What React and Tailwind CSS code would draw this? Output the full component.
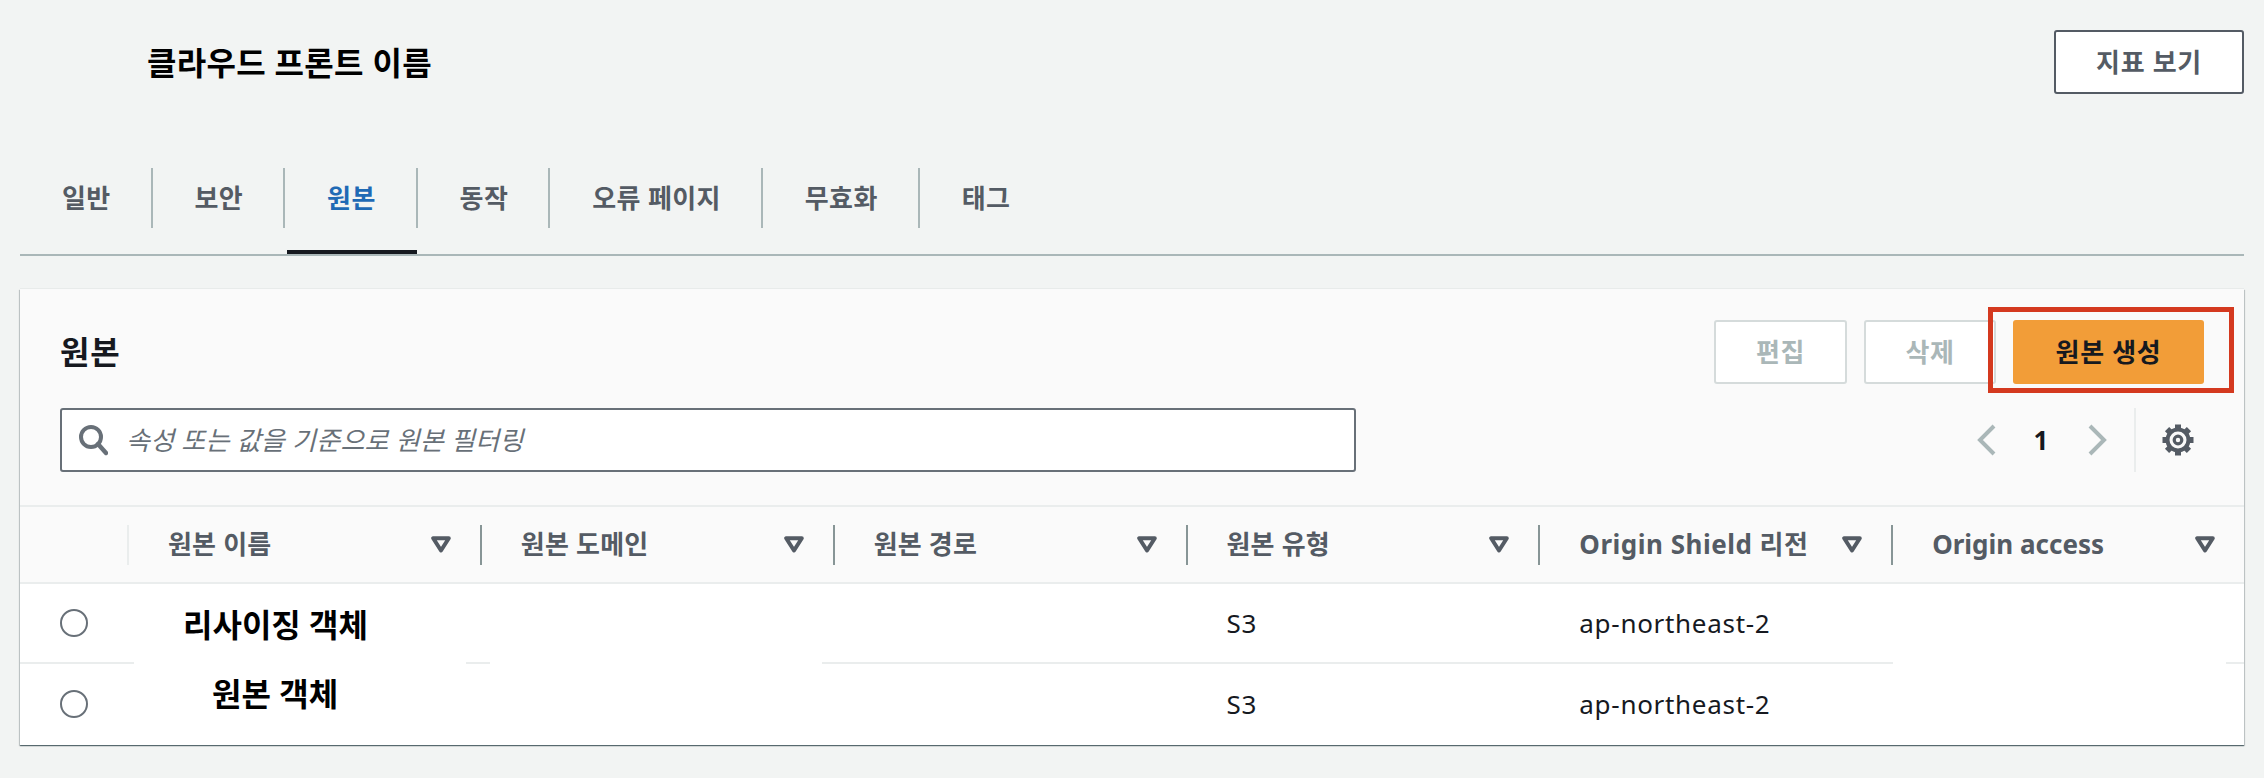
const tabs = [
  { label: "일반" },
  { label: "보안" },
  { label: "원본", active: true },
  { label: "동작" },
  { label: "오류 페이지" },
  { label: "무효화" },
  { label: "태그", last: true },
];

const columns = [
  { name: "원본 이름", track: "tracking-[0.2px]" },
  { name: "원본 도메인", track: "tracking-[0.2px]" },
  { name: "원본 경로", track: "tracking-[0.2px]" },
  { name: "원본 유형", track: "tracking-[0.2px]" },
  { name: "Origin Shield 리전", track: "tracking-[0.5px]" },
  { name: "Origin access", track: "tracking-normal" },
];

function SortIcon() {
  return (
    <svg width="20" height="18" viewBox="0 0 20 18" className="shrink-0">
      <polygon points="2.2,2.2 17.8,2.2 10,14.5" fill="none" stroke="#545b64" strokeWidth="4" strokeLinejoin="round" />
    </svg>
  );
}

function SearchIcon() {
  return (
    <svg width="30" height="32" viewBox="0 0 30 32" className="shrink-0">
      <circle cx="13" cy="13" r="10" fill="none" stroke="#687078" strokeWidth="4" />
      <path d="M20 20 L28 29" stroke="#687078" strokeWidth="4.4" strokeLinecap="round" />
    </svg>
  );
}

function Chevron({ dir }) {
  return (
    <svg width="20" height="32" viewBox="0 0 20 32" className="shrink-0">
      <polyline
        points={dir === "left" ? "17,2 3,16 17,30" : "3,2 17,16 3,30"}
        fill="none"
        stroke="#aab7b8"
        strokeWidth="4"
      />
    </svg>
  );
}

function GearIcon() {
  return (
    <svg width="34" height="34" viewBox="0 0 34 34" className="shrink-0">
      <circle cx="17" cy="17" r="10.5" fill="none" stroke="#545b64" strokeWidth="4" />
      <circle cx="17" cy="17" r="3.8" fill="none" stroke="#545b64" strokeWidth="3.2" />
      {[0, 45, 90, 135, 180, 225, 270, 315].map((deg) => (
        <rect key={deg} x="14" y="1.5" width="6" height="5" fill="#545b64" transform={`rotate(${deg} 17 17)`} />
      ))}
    </svg>
  );
}

function Radio() {
  return <span className="block w-[28px] h-[28px] rounded-full border-2 border-[#687078] bg-white" />;
}

export default function App() {
  return (
    <div className="w-full h-[778px] overflow-hidden bg-[#f2f4f3] px-[20px] pt-[30px] font-['Noto_Sans','Noto_Sans_CJK_KR',sans-serif] text-[26px] tracking-[0.7px] text-[#16191f]">
      <div className="flex items-center justify-between h-[64px]">
        <h1 className="pl-[127px] pt-[2px] text-[32px] tracking-[0.3px] font-semibold text-black leading-none">클라우드 프론트 이름</h1>
        <button className="w-[190px] h-[64px] bg-white border-2 border-[#545b64] rounded-[3px] font-bold text-[#545b64]">
          지표 보기
        </button>
      </div>

      <div className="mt-[74px] h-[88px] flex items-start border-b-2 border-[#aab7b8]">
        {tabs.map(({ label, active, last }) => (
          <div key={label} className="flex flex-col">
            <div
              className={`h-[60px] pl-[42px] pr-[39.9px] flex items-center font-bold leading-none tracking-[0.4px] ${
                last ? "" : "border-r-2 border-[#aab7b8]"
              } ${active ? "text-[#1f6ab5]" : "text-[#545b64]"}`}
            >
              {label}
            </div>
            <div className={`mt-[22px] ml-[2px] mr-[1px] h-[4px] ${active ? "bg-[#16191f]" : ""}`} />
          </div>
        ))}
      </div>

      <section className="relative mt-[33px] h-[456px] bg-white shadow-[0_1px_1px_0_rgba(0,28,36,0.5),1px_1px_1px_0_rgba(0,28,36,0.15),-1px_1px_1px_0_rgba(0,28,36,0.15),0_-1px_0_0_rgba(0,28,36,0.04)]">
        <div className="bg-[#fafafa] h-[216px] pt-[31px] px-[40px]">
          <div className="flex items-center justify-between h-[64px]">
            <h2 className="text-[32px] font-bold leading-none">원본</h2>
            <div className="flex items-center gap-[17px]">
              <button className="w-[133px] h-[64px] bg-white border-2 border-[#d5dbdb] rounded-[3px] font-bold text-[#aab7b8]">
                편집
              </button>
              <button className="w-[132px] h-[64px] bg-white border-2 border-[#d5dbdb] rounded-[3px] font-bold text-[#aab7b8]">
                삭제
              </button>
              <button className="w-[191px] h-[64px] bg-[#f29d38] rounded-[3px] font-bold text-[#16191f]">
                원본 생성
              </button>
            </div>
          </div>

          <div className="mt-[24px] flex items-center h-[64px]">
            <div className="w-[1296px] h-[64px] flex items-center gap-[18px] pl-[16px] bg-white border-2 border-[#687078] rounded-[3px]">
              <SearchIcon />
              <span className="italic tracking-[0.25px] text-[#687078]">속성 또는 값을 기준으로 원본 필터링</span>
            </div>
            <div className="ml-auto flex items-center h-[64px]">
              <Chevron dir="left" />
              <span className="ml-[36px] mr-[38px] font-bold leading-none">1</span>
              <Chevron dir="right" />
              <div className="ml-[27px] h-[64px] border-l-2 border-[#eaeded]" />
              <div className="ml-[25px] mr-[9px]">
                <GearIcon />
              </div>
            </div>
          </div>
        </div>

        <div className="grid grid-cols-[107px_repeat(6,1fr)] items-center h-[79px] bg-[#fafafa] border-y-2 border-[#eaeded]">
          <div />
          {columns.map(({ name, track }, i) => (
            <div
              key={name}
              className={`h-[40px] pl-[39px] pr-[29px] flex items-center justify-between border-l-2 font-bold text-[#545b64] leading-none ${
                i === 0 ? "border-[#eaeded]" : "border-[#879596]"
              }`}
            >
              <span className={`whitespace-nowrap pb-[2px] ${track}`}>{name}</span>
              <SortIcon />
            </div>
          ))}
        </div>

        <div className="grid grid-cols-[107px_repeat(6,1fr)] items-center h-[78px]">
          <div className="flex justify-center"><Radio /></div>
          <div className="pl-[56px] pt-[3px] text-[32px] tracking-normal font-bold text-black leading-none whitespace-nowrap">리사이징 객체</div>
          <div />
          <div />
          <div className="pl-[41px]">S3</div>
          <div className="pl-[41px]">ap-northeast-2</div>
        </div>

        <div className="flex h-[2px] bg-white">
          <div className="w-[114px] bg-[#eaeded]" />
          <div className="w-[332px]" />
          <div className="w-[24px] bg-[#eaeded]" />
          <div className="w-[332px]" />
          <div className="w-[1071px] bg-[#eaeded]" />
          <div className="w-[333px]" />
          <div className="w-[18px] bg-[#eaeded]" />
        </div>

        <div className="grid grid-cols-[107px_repeat(6,1fr)] items-center h-[80px]">
          <div className="flex justify-center"><Radio /></div>
          <div className="pl-[85px] pb-[20px] text-[32px] tracking-normal font-bold text-black leading-none whitespace-nowrap">원본 객체</div>
          <div />
          <div />
          <div className="pl-[41px]">S3</div>
          <div className="pl-[41px]">ap-northeast-2</div>
        </div>

        <div className="absolute top-[18px] right-[10px] w-[246px] h-[86px] border-[5px] border-[#d4391f]" />
      </section>
    </div>
  );
}
